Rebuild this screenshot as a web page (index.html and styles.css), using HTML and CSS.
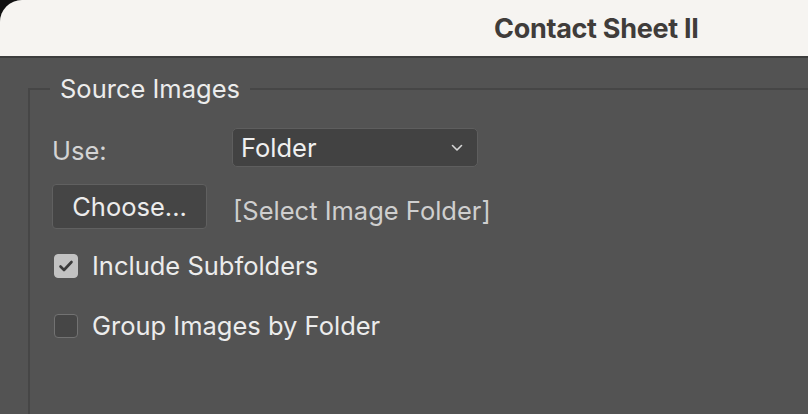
FILE: index.html
```html
<!DOCTYPE html>
<html>
<head>
    <title>Contact Sheet II</title>
    <link rel="stylesheet" href="styles.css">
</head>
<body>
    <div class="window">
        <div class="titlebar">
            <h1 class="title">Contact Sheet II</h1>
        </div>

        <div class="content">
            <fieldset class="group">
                <legend class="group-label">Source Images</legend>

                <div class="row row-use">
                    <label class="field-label" for="useSelect">Use:</label>
                    <div class="select">
                        <span id="useSelect">Folder</span>
                        <svg class="chevron" width="12" height="8" viewBox="0 0 12 8">
                            <path d="M1.5 1.5 L6 6 L10.5 1.5" fill="none" stroke="#d6d6d6" stroke-width="1.6" stroke-linecap="round" stroke-linejoin="round"/>
                        </svg>
                    </div>
                </div>

                <div class="row row-choose">
                    <button class="btn">Choose...</button>
                    <span class="path-text">[Select Image Folder]</span>
                </div>

                <div class="check-row first">
                    <span class="checkbox checked">
                        <svg width="16" height="14" viewBox="0 0 16 14">
                            <path d="M2.5 7.5 L6 11 L13.5 3" fill="none" stroke="#3b3b3b" stroke-width="2.6" stroke-linecap="round" stroke-linejoin="round"/>
                        </svg>
                    </span>
                    <span class="check-label">Include Subfolders</span>
                </div>

                <div class="check-row">
                    <span class="checkbox"></span>
                    <span class="check-label">Group Images by Folder</span>
                </div>
            </fieldset>
        </div>
    </div>
</body>
</html>
```

FILE: styles.css
```css
html, body {
    margin: 0;
    padding: 0;
    background-color: #111;
    height: 100%;
    overflow: hidden;
}

body {
    font-family: Inter, "Noto Sans", sans-serif;
}

* {
    box-sizing: border-box;
}

.window {
    height: 100%;
    display: flex;
    flex-direction: column;
    border-top-left-radius: 22px;
    overflow: hidden;
    background-color: #535353;
}

.titlebar {
    height: 58px;
    flex: none;
    background-color: #f6f4f1;
    border-bottom: 2px solid #3d3d3d;
    display: flex;
    align-items: center;
    padding-left: 494px;
}

.title {
    margin: 0;
    font-size: 27px;
    font-weight: 700;
    color: #403c3a;
    letter-spacing: -0.3px;
}

.content {
    flex: 1;
    padding: 16px 0 0 28px;
}

.group {
    margin: 0;
    padding: 0 0 0 22px;
    height: 400px;
    border: none;
    border-top: 2px solid #464646;
    border-left: 2px solid #464646;
}

.group-label {
    padding: 0 10px;
    margin-left: -2px;
    font-size: 25.5px;
    line-height: 30px;
    color: #ececec;
}

.row {
    display: flex;
    align-items: center;
}

.row-use {
    margin-top: 24px;
}

.field-label {
    width: 180px;
    font-size: 25.5px;
    line-height: 30px;
    color: #d4d4d4;
    padding-top: 7px;
}

.select {
    width: 246px;
    height: 39px;
    padding: 0 14px 0 8px;
    display: flex;
    align-items: center;
    justify-content: space-between;
    background-color: #424242;
    border: 1.5px solid #5e5e5e;
    border-radius: 5px;
    font-size: 25.5px;
    color: #f0f0f0;
}

.row-choose {
    margin-top: 17px;
}

.btn {
    width: 155px;
    height: 45px;
    background-color: #454545;
    border: 1.5px solid #606060;
    border-radius: 4px;
    color: #ececec;
    font-family: inherit;
    font-size: 25.5px;
    padding: 0;
    margin: 0;
}

.path-text {
    margin-left: 26px;
    margin-top: 7px;
    font-size: 25.5px;
    color: #cfcfcf;
}

.check-row {
    display: flex;
    align-items: center;
    height: 30px;
    margin-top: 30px;
    margin-left: 2px;
}

.check-row.first {
    margin-top: 22px;
}

.checkbox {
    width: 24px;
    height: 24px;
    border: 1.5px solid #727272;
    border-radius: 4px;
    background-color: #464646;
    display: flex;
    align-items: center;
    justify-content: center;
}

.checkbox.checked {
    background-color: #c2c2c2;
    border-color: #c2c2c2;
}

.check-label {
    margin-left: 14px;
    font-size: 25.5px;
    line-height: 30px;
    color: #ececec;
}
```
